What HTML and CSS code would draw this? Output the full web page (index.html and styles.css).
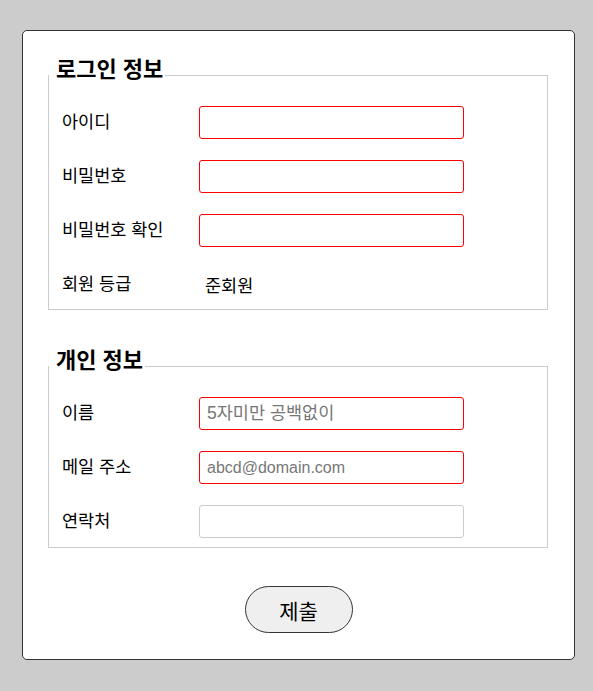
FILE: index.html
```html
<html>
	<head>
		<title>회원 가입</title>
		<meta name="viewport" content="width=device-width, initial-scale=1">
		<link rel="stylesheet" href="styles.css">
	</head>
	<body>
		<div id="container">
			<form id="join">
				<fieldset>
					<legend>로그인 정보</legend>
					<div class="rows">
						<div class="row">
							<label for="uid">아이디</label>
							<input type="text" id="uid" class="req"/>
						</div>
						<div class="row">
							<label for="upw">비밀번호</label>
							<input type="password" id="upw" class="req"/>
						</div>
						<div class="row">
							<label for="upw2">비밀번호 확인</label>
							<input type="password" id="upw2" class="req"/>
						</div>
						<div class="row">
							<span class="lbl">회원 등급</span>
							<span class="val">준회원</span>
						</div>
					</div>
				</fieldset>
				<fieldset>
					<legend>개인 정보</legend>
					<div class="rows last">
						<div class="row">
							<label for="uname">이름</label>
							<input type="text" id="uname" class="req ko" placeholder="5자미만 공백없이"/>
						</div>
						<div class="row">
							<label for="umail">메일 주소</label>
							<input type="email" id="umail" class="req" placeholder="abcd@domain.com"/>
						</div>
						<div class="row">
							<label for="utel">연락처</label>
							<input type="tel" id="utel"/>
						</div>
					</div>
				</fieldset>
				<div id="box_submit">
					<button type="submit">제출</button>
				</div>
			</form>
		</div>
	</body>
</html>
```
FILE: styles.css
```css
* {
	font-family: "Liberation Sans", "Noto Sans CJK KR", sans-serif;
	box-sizing: border-box;
}
body {
	background: #cccccc;
	margin: 0;
	padding: 30px 0 0 22px;
}
#container {
	width: 553px;
	height: 630px;
	background: white;
	border: 1px solid #333;
	border-radius: 5px;
	padding-top: 27px;
}
fieldset {
	margin: 0 26px 0 25px;
	padding: 0;
	border: 1px solid #cccccc;
}
fieldset + fieldset {
	margin-top: 39px;
}
legend {
	font-size: 22px;
	font-weight: bold;
	padding: 0 2px 10px 7px;
	line-height: 24px;
	color: black;
}
.rows {
	display: flex;
	flex-direction: column;
	gap: 21px;
	padding: 14px 0 8px 13px;
}
.rows.last {
	padding-bottom: 9px;
}
.row {
	display: flex;
	align-items: center;
	height: 33px;
}
label, .lbl {
	width: 137px;
	font-size: 17.5px;
	color: black;
	padding-bottom: 5px;
}
.val {
	font-size: 17.5px;
	padding-left: 6px;
	padding-bottom: 1px;
}
input {
	width: 265px;
	height: 33px;
	border: 1px solid #cccccc;
	border-radius: 3px;
	padding: 0 7px;
	font-size: 16px;
}
input.req {
	border-color: red;
}
input.ko {
	font-size: 17.5px;
}
input::placeholder {
	color: #777;
}
#box_submit {
	text-align: center;
	padding-top: 38px;
}
button {
	width: 108px;
	height: 47px;
	border: 1px solid #333;
	border-radius: 24px;
	background: #efefef;
	font-size: 21px;
	color: black;
}
```
